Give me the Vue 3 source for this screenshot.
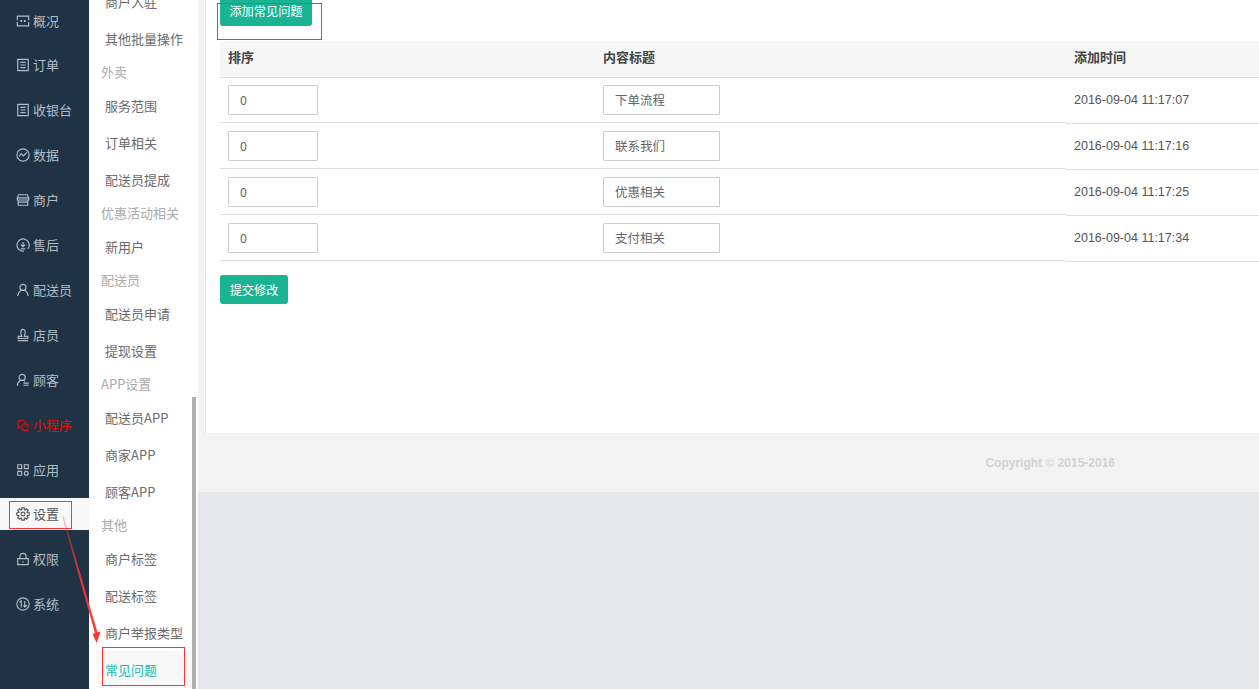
<script setup>
function gear() {
  const pts = [];
  const n = 8;
  for (let i = 0; i < n; i++) {
    const a = (i / n) * Math.PI * 2;
    const w = 0.2;
    [[a - 0.33, 5], [a - w, 7.2], [a + w, 7.2], [a + 0.33, 5]].forEach(([t, r]) => {
      pts.push((8 + r * Math.cos(t)).toFixed(2) + ' ' + (8 + r * Math.sin(t)).toFixed(2));
    });
  }
  return 'M' + pts.join('L') + 'Z M10.2 8a2.2 2.2 0 1 1-4.4 0a2.2 2.2 0 1 1 4.4 0Z';
}

const doc = 'M2 1.500h12v13H2Z M5 5h6 M5 8h6 M5 11h6';
const navItems = [
  { label: '概况', d: 'M1.500 7V2.500h13V7 M1.500 9v4.500h13V9 M5 7.500h2 M9 7.500h2 M5 8.500h2 M9 8.500h2' },
  { label: '订单', d: doc },
  { label: '收银台', d: doc },
  { label: '数据', d: 'M15 8A7 7 0 1 1 1 8A7 7 0 1 1 15 8Z M3.500 9.500L6 6.500L8.500 9L12.500 5' },
  { label: '商户', d: 'M3 2h10l1.500 3.500h-13Z M1.500 5.500v2.500h13V5.500 M2.500 8v6h11V8 M2.500 10.500h11' },
  { label: '售后', d: 'M13.500 12.500A7 7 0 1 0 9 15 M8 4.500v5.500 M5.500 7.500L8 10L10.500 7.500 M5.500 12.500h5' },
  { label: '配送员', d: 'M11.500 5A3.500 3.500 0 1 1 4.500 5A3.500 3.500 0 1 1 11.500 5Z M2 15Q2.500 10 6 8.500 M14 15Q13.500 10 10 8.500' },
  { label: '店员', d: 'M5.500 4.500A2.500 3 0 1 1 10.500 4.500Q10.500 7 9.500 9.500H13.500V12H2.500V9.500H6.500Q5.500 7 5.500 4.500Z M2 14.500H14' },
  { label: '顾客', d: 'M10.500 5A3.500 3.500 0 1 1 3.500 5A3.500 3.500 0 1 1 10.500 5Z M1.500 14.500Q1.500 10.500 5 8.500 M9 8.500L10.500 9.500 M8.500 11.500h6 M8.500 14h6' },
  { label: '小程序', d: 'M11 6.500A4.500 4 0 1 0 3 9L2.500 11.500L5 10.500 M14.500 10.500A4 3.500 0 1 0 13 13L13.500 14.500L11.500 14 A4 3.500 0 0 1 6.500 10.500', red: true },
  { label: '应用', d: 'M2 2h4.500v4.500H2Z M9.500 2h4.500v4.500H9.500Z M2 9.500h4.500V14H2Z M9.500 11.750a2.250 2.250 0 1 1 4.500 0a2.250 2.250 0 1 1 -4.500 0Z' },
  { label: '设置', d: gear(), active: true },
  { label: '权限', d: 'M2 7.500h12v7H2Z M4.500 7.500V5Q4.500 1.500 8 1.500T11.500 5V7.500 M8 10.500v1.500' },
  { label: '系统', d: 'M15 8A7 7 0 1 1 1 8A7 7 0 1 1 15 8Z M4 6L6 4.500V12 M10 4.500V11.500 M8.500 9.500L10 11.500L12.500 9.500' },
];

const subItems = [
  { t: '商户入驻' },
  { t: '其他批量操作' },
  { t: '外卖', group: true },
  { t: '服务范围' },
  { t: '订单相关' },
  { t: '配送员提成' },
  { t: '优惠活动相关', group: true },
  { t: '新用户' },
  { t: '配送员', group: true },
  { t: '配送员申请' },
  { t: '提现设置' },
  { t: 'APP设置', group: true },
  { t: '配送员APP' },
  { t: '商家APP' },
  { t: '顾客APP' },
  { t: '其他', group: true },
  { t: '商户标签' },
  { t: '配送标签' },
  { t: '商户举报类型' },
  { t: '常见问题', active: true },
];

const rows = [
  { sort: '0', title: '下单流程', time: '2016-09-04 11:17:07' },
  { sort: '0', title: '联系我们', time: '2016-09-04 11:17:16' },
  { sort: '0', title: '优惠相关', time: '2016-09-04 11:17:25' },
  { sort: '0', title: '支付相关', time: '2016-09-04 11:17:34' },
];
</script>

<template>
  <div class="page">
    <nav class="sidebar">
      <a
        v-for="item in navItems"
        :key="item.label"
        class="nav-item"
        :class="{ active: item.active, red: item.red }"
      >
        <svg class="nav-icon" viewBox="0 0 16 16" fill="none" stroke="currentColor" stroke-width="1.3">
          <path :d="item.d" />
        </svg>
        <span>{{ item.label }}</span>
      </a>
    </nav>

    <aside class="subnav">
      <template v-for="s in subItems" :key="s.t">
        <div v-if="s.group" class="sub-group">{{ s.t }}</div>
        <a v-else class="sub-link" :class="{ active: s.active }">{{ s.t }}</a>
      </template>
      <div class="scroll-thumb"></div>
    </aside>

    <main class="main">
      <section class="gutter">
        <div class="panel">
          <button class="btn add-btn">添加常见问题</button>
          <div class="table">
            <div class="head">
              <div>排序</div>
              <div>内容标题</div>
              <div>添加时间</div>
            </div>
            <div v-for="r in rows" :key="r.title" class="row">
              <div class="cell">
                <input class="field field-sort" :value="r.sort" readonly />
              </div>
              <div class="cell">
                <input class="field field-title" :value="r.title" readonly />
              </div>
              <div class="cell time">{{ r.time }}</div>
            </div>
          </div>
          <button class="btn submit-btn">提交修改</button>
        </div>
      </section>
      <footer class="footer">Copyright © 2015-2016</footer>
    </main>

    <div class="mark mark-a"></div>
    <div class="mark mark-b"></div>
    <div class="mark mark-c"></div>
    <svg class="arrow" width="1259" height="689" viewBox="0 0 1259 689">
      <defs>
        <linearGradient id="arrowFade" x1="0" y1="0" x2="0" y2="1">
          <stop offset="0" stop-color="#ff3b3b" stop-opacity="0.25" />
          <stop offset="0.5" stop-color="#f33" stop-opacity="0.9" />
          <stop offset="1" stop-color="#f33" />
        </linearGradient>
      </defs>
      <polygon points="62,516 63.500,516 97.500,632.500 100.500,631.500 96.700,643 92.500,634 95,633.200" fill="url(#arrowFade)" />
    </svg>
  </div>
</template>

<style scoped>
.page {
  position: relative;
  display: flex;
  width: 1259px;
  height: 689px;
  overflow: hidden;
  background: #e7e8ec;
  font-family: "Noto Sans CJK SC", "Liberation Sans", sans-serif;
  font-size: 13px;
  color: #676a6c;
}

.sidebar {
  flex: none;
  display: flex;
  flex-direction: column;
  width: 89px;
  height: 689px;
  background: #1f3344;
  overflow: hidden;
}

.nav-item {
  flex: none;
  display: flex;
  align-items: center;
  gap: 3px;
  height: 32px;
  margin: 6.46px 0;
  padding-left: 16px;
  color: #b5bec6;
  line-height: 32px;
}

.nav-item:first-child {
  margin-top: 4.5px;
}

.nav-item.active {
  background: #f8f8f8;
  color: #555;
}

.nav-item.active span {
  color: #555;
}

.nav-item.red {
  color: #f00;
}

.nav-icon {
  flex: none;
  width: 14px;
  height: 14px;
}

.subnav {
  position: relative;
  flex: none;
  width: 109px;
  height: 689px;
  background: #fff;
  overflow: hidden;
}

.sub-link {
  display: block;
  height: 37px;
  padding-left: 16px;
  line-height: 37px;
  white-space: nowrap;
  color: #6b6b6b;
}

.sub-link:first-child {
  margin-top: -17px;
}

.sub-link.active {
  width: 90px;
  margin-left: 9px;
  padding-left: 7px;
  background: #f8f8f8;
  color: #17bcb0;
}

.sub-group {
  height: 30px;
  padding-left: 12px;
  line-height: 30px;
  color: #aaa;
}

.scroll-thumb {
  position: absolute;
  top: 397px;
  left: 103px;
  bottom: 0;
  width: 4px;
  background: #b0b0b0;
}

.main {
  flex: 1;
  display: flex;
  flex-direction: column;
  min-width: 0;
}

.gutter {
  flex: none;
  height: 433px;
  padding-left: 7px;
  background: #f3f3f4;
}

.panel {
  height: 433px;
  padding-left: 14px;
  background: #fff;
  border-left: 1px solid #e5e5e5;
  overflow: hidden;
}

.btn {
  display: block;
  border: 0;
  border-radius: 3px;
  background: #1ab394;
  color: #fff;
  font-family: "Noto Sans CJK SC", "Liberation Sans", sans-serif;
  font-size: 12.2px;
  padding: 0;
}

.add-btn {
  width: 92px;
  height: 30px;
  margin-top: -4px;
}

.submit-btn {
  width: 68px;
  height: 29px;
  margin-top: 13px;
}

.table {
  margin-top: 15px;
  width: 1039px;
}

.head,
.row {
  display: grid;
  grid-template-columns: 375px 471px 193px;
}

.head {
  height: 37px;
  box-sizing: border-box;
  background: #f7f7f7;
  border-bottom: 1px solid #ddd;
  line-height: 31px;
  font-weight: 700;
  color: #444;
}

.head > div {
  padding-left: 8px;
}

.cell {
  height: 45px;
  margin-bottom: 1px;
  padding: 7px 0 0 8px;
  box-sizing: border-box;
  border-bottom: 1px solid #ddd;
}

.cell.time {
  height: 46px;
  margin-bottom: 0;
  padding-top: 0;
  font-family: "Liberation Sans", sans-serif;
  font-size: 12.5px;
  line-height: 44px;
  color: #555;
}

.field {
  display: block;
  height: 30px;
  box-sizing: border-box;
  padding: 0 0 2px 11px;
  border: 1px solid #ccc;
  border-radius: 1px;
  outline: none;
  background: #fff;
  font-family: "Noto Sans CJK SC", "Liberation Sans", sans-serif;
  font-size: 12.5px;
  color: #666;
}

.field-sort {
  width: 90px;
}

.field-title {
  width: 117px;
}

.footer {
  flex: none;
  height: 59px;
  padding-right: 144px;
  background: #f3f3f4;
  font-family: "Liberation Sans", sans-serif;
  font-size: 12px;
  font-weight: 700;
  line-height: 60px;
  text-align: right;
  color: #d2d2d2;
}

.mark {
  position: absolute;
  box-sizing: border-box;
  border: 1px solid #f33;
  pointer-events: none;
}

.mark-a {
  left: 217px;
  top: 3px;
  width: 105px;
  height: 37px;
}

.mark-b {
  left: 9px;
  top: 501px;
  width: 63px;
  height: 28px;
}

.mark-c {
  left: 102px;
  top: 647px;
  width: 83px;
  height: 39px;
}

.arrow {
  position: absolute;
  left: 0;
  top: 0;
  pointer-events: none;
}
</style>

<style>
html,
body {
  margin: 0;
  overflow: hidden;
}
</style>
